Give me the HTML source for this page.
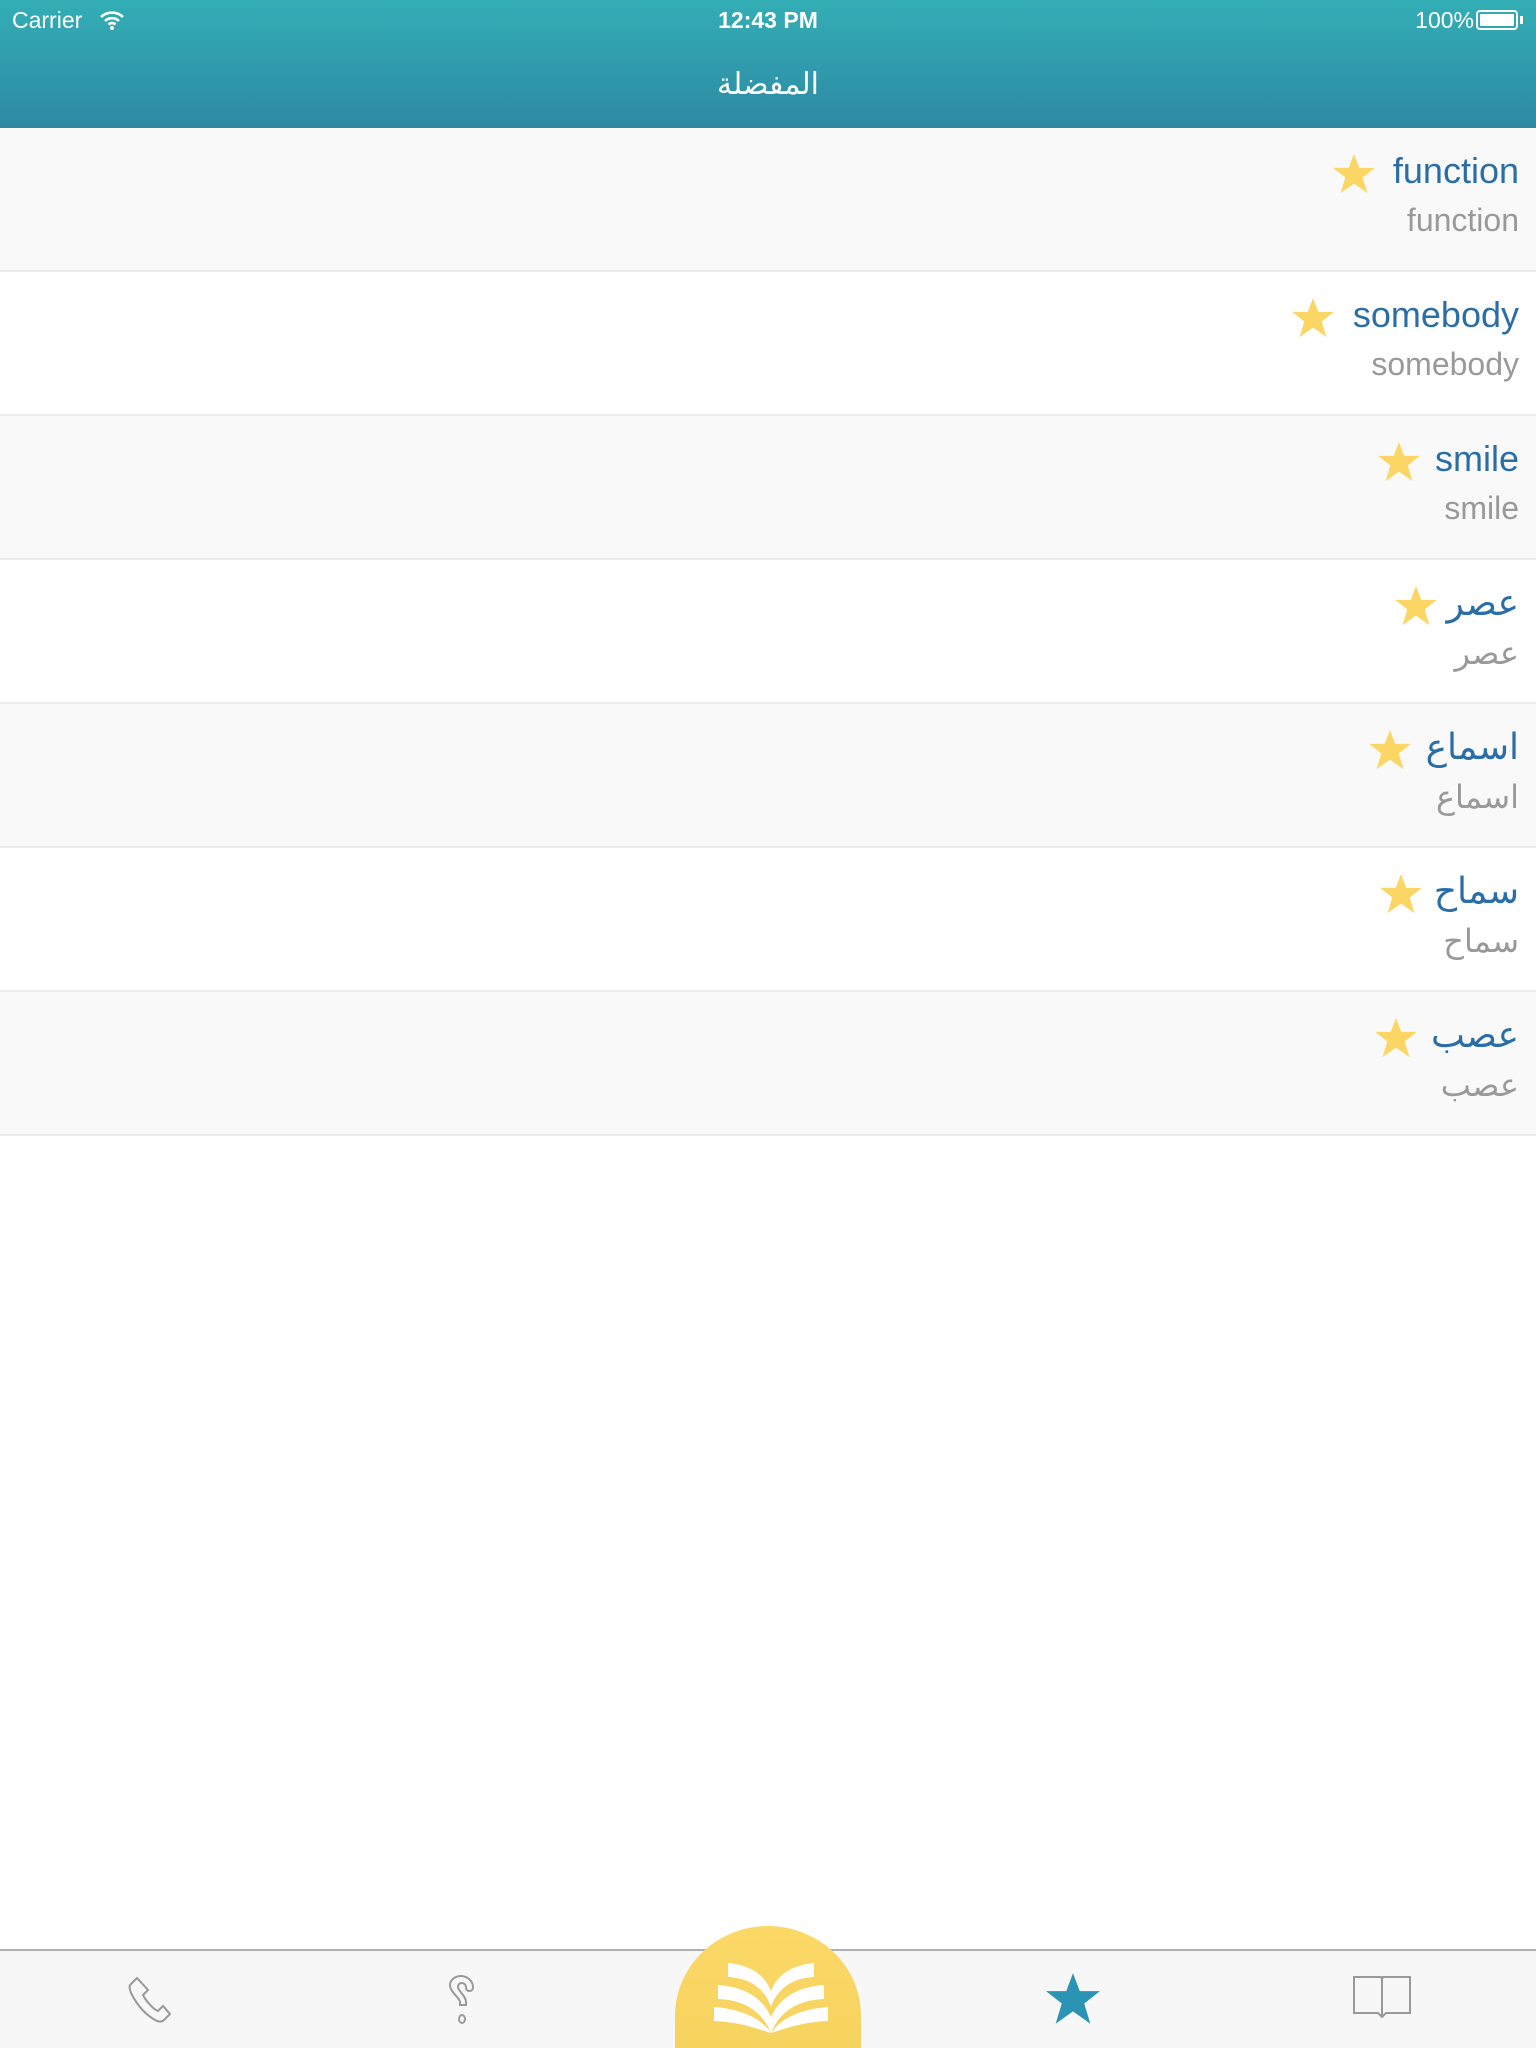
<!DOCTYPE html>
<html style="overflow:hidden;height:2048px;background:#f7f7f7"><head><meta charset="utf-8">
<style>
*{margin:0;padding:0;box-sizing:border-box}
body{width:1536px;height:2048px;position:relative;background:#fff;font-family:"Liberation Sans","Noto Sans CJK SC",sans-serif;overflow:hidden}
.hdr{position:absolute;left:0;top:0;width:1536px;height:128px;background:linear-gradient(#33aeb5,#2e89a4);color:#fff}
.sb{position:absolute;top:7px;font-size:23px}
.title{position:absolute;top:67px;width:100%;text-align:center;font-size:30px;font-family:"Liberation Sans","DejaVu Sans",sans-serif}
.row{position:absolute;left:0;width:1536px;height:144px;border-bottom:2px solid #ececec}
.row.g{background:#f9f9f9}
.p{position:absolute;right:17px;top:22px;font-size:36px;color:#2b6ea6;font-family:"Liberation Sans","DejaVu Sans",sans-serif}
.s{position:absolute;right:17px;top:74px;font-size:32px;color:#999;font-family:"Liberation Sans","DejaVu Sans",sans-serif}
.star{position:absolute;top:26px;width:42px;height:40px}
.tab{position:absolute;left:0;top:1949px;width:1536px;height:99px;background:#f7f7f7;border-top:2px solid #b0b0b0}
.dome{position:absolute;left:675px;top:1926px;width:186px;height:122px;background:linear-gradient(#fcd967,#f6d35f);border-radius:93px 93px 0 0/90px 90px 0 0}
</style></head><body>
<div class="hdr">
<div class="sb" style="left:12px">Carrier</div>
<svg style="position:absolute;left:99px;top:10px" width="26" height="20" viewBox="0 0 26 20"><path d="M2 7a16 16 0 0 1 22 0M6 11a10 10 0 0 1 14 0M9.5 14.5a5 5 0 0 1 7 0" stroke="#fff" stroke-width="2.6" fill="none"/><circle cx="13" cy="18" r="2" fill="#fff"/></svg>
<div class="sb" style="left:0;width:100%;text-align:center;font-weight:bold">12:43 PM</div>
<div class="sb" style="right:62px">100%</div>
<div style="position:absolute;left:1476px;top:10px;width:42px;height:20px;border:2px solid #fff;border-radius:4px;padding:2px"><div style="width:100%;height:100%;background:#fff;border-radius:1px"></div></div>
<div style="position:absolute;left:1520px;top:16px;width:3px;height:8px;background:#fff"></div>
<div class="title">المفضلة</div>
</div>

<div class="row g" style="top:128px"><svg class="star" style="left:1333px" viewBox="0 0 24 23"><path d="M12 0l3 8h9l-7 5.5 2.7 9L12 17l-7.7 5.5 2.7-9L0 8h9z" fill="#fcd664"/></svg><div class="p">function</div><div class="s">function</div></div>
<div class="row" style="top:272px"><svg class="star" style="left:1292px" viewBox="0 0 24 23"><path d="M12 0l3 8h9l-7 5.5 2.7 9L12 17l-7.7 5.5 2.7-9L0 8h9z" fill="#fcd664"/></svg><div class="p">somebody</div><div class="s">somebody</div></div>
<div class="row g" style="top:416px"><svg class="star" style="left:1378px" viewBox="0 0 24 23"><path d="M12 0l3 8h9l-7 5.5 2.7 9L12 17l-7.7 5.5 2.7-9L0 8h9z" fill="#fcd664"/></svg><div class="p">smile</div><div class="s">smile</div></div>
<div class="row" style="top:560px"><svg class="star" style="left:1395px" viewBox="0 0 24 23"><path d="M12 0l3 8h9l-7 5.5 2.7 9L12 17l-7.7 5.5 2.7-9L0 8h9z" fill="#fcd664"/></svg><div class="p">عصر</div><div class="s">عصر</div></div>
<div class="row g" style="top:704px"><svg class="star" style="left:1369px" viewBox="0 0 24 23"><path d="M12 0l3 8h9l-7 5.5 2.7 9L12 17l-7.7 5.5 2.7-9L0 8h9z" fill="#fcd664"/></svg><div class="p">اسماع</div><div class="s">اسماع</div></div>
<div class="row" style="top:848px"><svg class="star" style="left:1380px" viewBox="0 0 24 23"><path d="M12 0l3 8h9l-7 5.5 2.7 9L12 17l-7.7 5.5 2.7-9L0 8h9z" fill="#fcd664"/></svg><div class="p">سماح</div><div class="s">سماح</div></div>
<div class="row g" style="top:992px"><svg class="star" style="left:1375px" viewBox="0 0 24 23"><path d="M12 0l3 8h9l-7 5.5 2.7 9L12 17l-7.7 5.5 2.7-9L0 8h9z" fill="#fcd664"/></svg><div class="p">عصب</div><div class="s">عصب</div></div>

<div class="tab"></div>
<div class="dome"></div>
<svg style="position:absolute;left:712px;top:1963px" width="118" height="70" viewBox="0 0 118 70">
<g fill="#fff">
<path d="M16 0c20 2 36 10 43 28c7-18 23-26 43-28v14c-20 1-36 10-43 30c-7-20-23-29-43-30z"/>
<path d="M6 22c26 2 44 12 53 32c9-20 27-30 53-32v14c-26 1-44 12-53 34c-9-22-27-33-53-34z"/>
<path d="M2 44c28 2 48 12 57 26c9-14 29-24 57-26v14c-26 1-44 8-57 12c-13-4-31-11-57-12z"/>
</g></svg>
<svg style="position:absolute;left:127px;top:1977px" width="50" height="46" viewBox="0 0 50 46"><path d="M10 1l-7 7c-1 2 0 5 1 8c6 12 14 22 26 28c3 1 5 1 7-1l6-6l-7-8l-5 5c-5-2-12-10-15-16l5-5z" fill="none" stroke="#999" stroke-width="2"/></svg>
<svg style="position:absolute;left:446px;top:1975px" width="34" height="50" viewBox="0 0 34 50"><path d="M14 30v-3c0-4-10-10-10-17c0-5 5-9 11-9c6 0 12 5 12 11c0 3-1 4-4 4c-2 0-3-2-3-4c0-2-2-4-4-4c-3 0-4 2-4 4c0 4 8 9 8 15v3z" fill="none" stroke="#999" stroke-width="2"/><ellipse cx="16" cy="44" rx="3" ry="4" fill="none" stroke="#999" stroke-width="2"/></svg>
<svg style="position:absolute;left:1046px;top:1972px" width="54" height="54" viewBox="0 0 24 23"><path d="M12 0l3 8h9l-7 5.5 2.7 9L12 17l-7.7 5.5 2.7-9L0 8h9z" fill="#2b94b5"/></svg>
<svg style="position:absolute;left:1353px;top:1976px" width="58" height="48" viewBox="0 0 58 48"><path d="M1 1h27l1 2l1-2h27v36h-24l-4 4l-4-4h-24z M29 3v38" fill="none" stroke="#999" stroke-width="2"/></svg>
</body></html>
